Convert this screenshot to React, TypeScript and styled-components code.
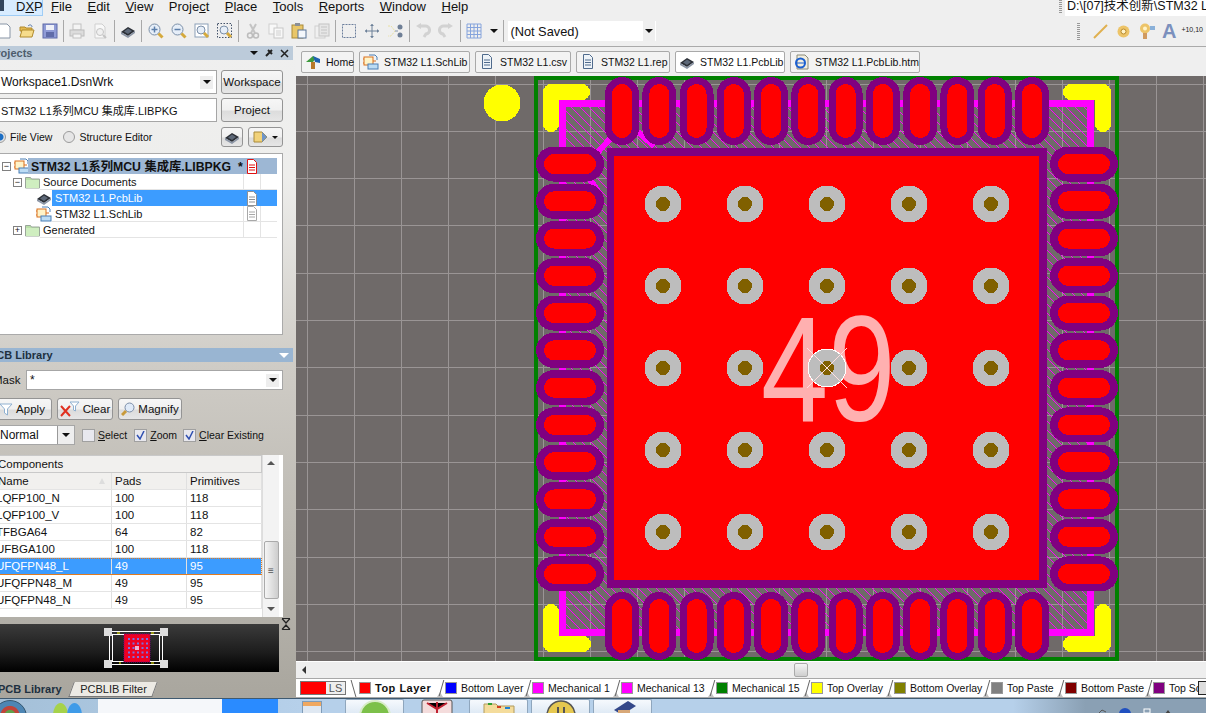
import React from 'react'
import styled, { createGlobalStyle } from 'styled-components'

const FONT = '"Liberation Sans", "Noto Sans CJK SC", Arial, sans-serif'

const GlobalStyle = createGlobalStyle`
  html, body {
    margin: 0;
    padding: 0;
    overflow: hidden;
    background: #efefef;
    font-family: ${FONT};
    font-size: 11px;
    color: #111;
  }
  * { box-sizing: border-box; }
  u { text-underline-offset: 1px; }
`

const Page = styled.div`
  width: 1206px;
  height: 713px;
  display: flex;
  flex-direction: column;
  overflow: hidden;
  background: #efefef;
`

/* ---------- icons ---------- */

const Svg: React.FC<{ w?: number; h?: number; children: React.ReactNode }> = ({ w = 16, h = 16, children }) => (
  <svg width={w} height={h} viewBox={`0 0 ${w} ${h}`} style={{ display: 'block', flex: 'none' }}>
    {children}
  </svg>
)

const Doc = ({ stroke = '#7d8794', fill = '#fff', line = '#7d8794' }) => (
  <Svg w={12} h={15}>
    <path d="M1.5 .5h6l3 3v11h-9z" fill={fill} stroke={stroke} />
    <path d="M3 6h6M3 8.500h6M3 11h6" stroke={line} />
  </Svg>
)

const Magnifier = ({ inner }: { inner?: React.ReactNode }) => (
  <Svg>
    <circle cx="6.500" cy="6.500" r="5.500" fill="#e6eef8" stroke="#7b8fa8" />
    {inner}
    <path d="M10.500 10.500l4 4" stroke="#d5a93c" strokeWidth="3" />
  </Svg>
)

const ChipIcon = () => (
  <Svg>
    <path d="M1 9l7-5 7 4-7 5z" fill="#2b2f36" />
    <path d="M1 9v2l7 4 7-5V8l-7 5z" fill="#8c96a6" />
    <path d="M4 8.500l4-3 4 2.500-4 3z" fill="#5d6878" />
  </Svg>
)

const SchIcon = () => (
  <Svg>
    <rect x="1" y="3" width="9" height="8" fill="#fff3c8" stroke="#d9701e" />
    <path d="M10 7h3M0 5h1M0 9h1" stroke="#d9701e" />
    <rect x="5" y="10" width="10" height="5" fill="#bcdcf4" stroke="#4a7fb5" />
    <path d="M6 1h6l2 2v3" fill="none" stroke="#4a7fb5" />
  </Svg>
)

const FolderIcon = () => (
  <Svg w={15} h={13}>
    <path d="M.5 3V1.500h5l1 1.500h8v9H.5z" fill="#b9dfa8" stroke="#9aa69a" />
    <rect x="1" y="4" width="13" height="8" fill="#cfeec0" />
  </Svg>
)

const DownTri = ({ color = '#111', size = 4 }: { color?: string; size?: number }) => (
  <Svg w={size * 2} h={size}>
    <path d={`M0 0h${size * 2}l-${size} ${size}z`} fill={color} />
  </Svg>
)

const UpTri = ({ color = '#555', size = 4 }: { color?: string; size?: number }) => (
  <Svg w={size * 2} h={size}>
    <path d={`M0 ${size}h${size * 2}l-${size} -${size}z`} fill={color} />
  </Svg>
)

const FunnelIcon = ({ color = '#8fb0d0' }) => (
  <Svg w={14} h={14}>
    <path d="M1 2h12L8.500 7v6l-3-2V7z" fill="#fff" stroke={color} />
  </Svg>
)

const ClearIcon = () => (
  <Svg w={20} h={16}>
    <path d="M1 5l9 10M10 5L1 15" stroke="#e03020" strokeWidth="2" />
    <path d="M10 1h9l-3.500 4v5l-2-1V5z" fill="#fff" stroke="#8fb0d0" />
  </Svg>
)

const toolIcons: Record<string, React.ReactNode> = {
  new: <Svg><path d="M2 1h9l3 3v11H2z" fill="#fff" stroke="#8895a6" /></Svg>,
  open: (
    <Svg>
      <path d="M1 4h5l1 1h6v3H1z" fill="#e4b94f" stroke="#b08a2c" />
      <path d="M1 14l2-7h12l-2 7z" fill="#f6dc8b" stroke="#b08a2c" />
      <path d="M9 3c2-2 4-1 4 1" fill="none" stroke="#5577aa" />
    </Svg>
  ),
  save: (
    <Svg>
      <rect x="1" y="1" width="14" height="14" fill="#8f9bd6" stroke="#5f6ba8" />
      <rect x="4" y="2" width="8" height="5" fill="#eef0f8" />
      <rect x="4" y="9" width="8" height="5" fill="#5f6ba8" />
    </Svg>
  ),
  print: (
    <Svg>
      <rect x="4" y="1" width="8" height="6" fill="#f4f4f4" stroke="#c2c2c2" />
      <rect x="1" y="7" width="14" height="6" fill="#dcdcdc" stroke="#bcbcbc" />
      <rect x="4" y="11" width="8" height="4" fill="#f4f4f4" stroke="#c2c2c2" />
    </Svg>
  ),
  preview: (
    <Svg>
      <path d="M3 1h7l3 3v11H3z" fill="#f8f8f8" stroke="#cfcfcf" />
      <circle cx="8" cy="9" r="3.500" fill="#f0f0f0" stroke="#c4c4c4" />
      <path d="M11 12l3 3" stroke="#c4c4c4" strokeWidth="2" />
    </Svg>
  ),
  chip: <ChipIcon />,
  zoomIn: <Magnifier inner={<path d="M3.500 6.500h6M6.500 3.500v6" stroke="#5c7faa" strokeWidth="1.500" />} />,
  zoomOut: <Magnifier inner={<path d="M3.500 6.500h6" stroke="#5c7faa" strokeWidth="1.500" />} />,
  zoomFit: (
    <Svg>
      <rect x="1" y="1" width="13" height="13" fill="#fff" stroke="#8ba0b8" />
      <circle cx="7" cy="7" r="4" fill="#e6eef8" stroke="#7b8fa8" />
      <path d="M10 10l4 4" stroke="#d5a93c" strokeWidth="3" />
    </Svg>
  ),
  zoomSel: (
    <Svg>
      <rect x=".5" y=".5" width="14" height="14" fill="none" stroke="#44536a" strokeDasharray="1.500 1.500" />
      <circle cx="7" cy="7" r="4" fill="#e6eef8" stroke="#7b8fa8" />
      <path d="M10 10l4 4" stroke="#d5a93c" strokeWidth="3" />
    </Svg>
  ),
  cut: (
    <Svg>
      <path d="M5 1l5 9M11 1L6 10" stroke="#c4c4c4" strokeWidth="2" />
      <circle cx="5" cy="12.500" r="2.500" fill="none" stroke="#bcbcbc" strokeWidth="1.500" />
      <circle cx="11" cy="12.500" r="2.500" fill="none" stroke="#bcbcbc" strokeWidth="1.500" />
    </Svg>
  ),
  copy: (
    <Svg>
      <rect x="1" y="1" width="8" height="10" fill="#f8f8f8" stroke="#d0d0d0" />
      <rect x="6" y="5" width="9" height="10" fill="#f8f8f8" stroke="#c8c8c8" />
      <path d="M8 8h5M8 10h5M8 12h5" stroke="#d0d0d0" />
    </Svg>
  ),
  paste: (
    <Svg>
      <rect x="1" y="2" width="11" height="13" fill="#e9c668" stroke="#a98a3a" />
      <rect x="4" y="0" width="5" height="3" fill="#8b8f96" />
      <rect x="7" y="7" width="8" height="8" fill="#f4f7fb" stroke="#5b7497" />
    </Svg>
  ),
  pasteSpecial: (
    <Svg>
      <rect x="1" y="3" width="10" height="12" fill="#f0f0f0" stroke="#cfcfcf" />
      <rect x="5" y="1" width="10" height="12" fill="#e6e6e6" stroke="#c4c4c4" />
      <path d="M7 4h6M7 7h6M7 10h6" stroke="#c4c4c4" />
    </Svg>
  ),
  select: <Svg><rect x="1.500" y="1.500" width="13" height="13" fill="none" stroke="#6c7f9c" strokeDasharray="2 1" /></Svg>,
  move: (
    <Svg>
      <path d="M8 1v14M1 8h14" stroke="#6c8098" />
      <path d="M8 1l-2 2h4zM8 15l-2-2h4zM1 8l2-2v4zM15 8l-2-2v4z" fill="#6c8098" />
    </Svg>
  ),
  swap: (
    <Svg>
      <path d="M1 3h3l4 5-4 5H1" fill="none" stroke="#e8dfa2" strokeDasharray="2 1" />
      <path d="M8 8h3" stroke="#8292a8" />
      <circle cx="13" cy="4" r="2.500" fill="#6f7f96" />
      <circle cx="13" cy="12" r="2.500" fill="#6f7f96" />
    </Svg>
  ),
  undo: <Svg><path d="M4 3h6a4 4 0 0 1 1 8l-2 3" fill="none" stroke="#d2d2d2" strokeWidth="3" /><path d="M1 3l5-3v6z" fill="#d2d2d2" /></Svg>,
  redo: <Svg><path d="M12 3H6a4 4 0 0 0-1 8l2 3" fill="none" stroke="#d2d2d2" strokeWidth="3" /><path d="M15 3l-5-3v6z" fill="#d2d2d2" /></Svg>,
  grid: (
    <Svg>
      <path d="M1 1v14M4.500 1v14M8 1v14M11.500 1v14M15 1v14M1 1h14M1 4.500h14M1 8h14M1 11.500h14M1 15h14" stroke="#86a4dc" />
    </Svg>
  )
}

/* ---------- menu and toolbar ---------- */

const MenuBar = styled.div`
  height: 16px;
  display: flex;
  align-items: flex-start;
  gap: 15.500px;
  font-size: 13px;
  line-height: 13px;
`

const DxpButton = styled.div`
  width: 43px;
  height: 16px;
  margin-right: -7.500px;
  padding-left: 16px;
  background: #d8ecff;
  border: 1px solid #9fcdf6;
  border-top: none;
  border-left: none;
  position: relative;
  &::before {
    content: '';
    position: absolute;
    left: 0;
    top: 0;
    width: 4px;
    height: 11px;
    background: #33465e;
  }
`

const MenuItem = styled.span``

const AddressWrap = styled.div`
  margin-left: auto;
  display: flex;
  align-items: flex-start;
`

const Gripper = styled.div<{ $height: number }>`
  width: 3px;
  height: ${p => p.$height}px;
  margin-right: 3px;
  background: repeating-linear-gradient(to bottom, #999 0 1px, transparent 1px 2px);
`

const Address = styled.div`
  width: 141px;
  height: 16px;
  padding-left: 2px;
  background: #fff;
  font-size: 12.500px;
  white-space: nowrap;
  overflow: hidden;
`

const Toolbar = styled.div`
  height: 30px;
  display: flex;
  align-items: center;
  margin-left: -8px;
`

const ToolButton = styled.div`
  width: 23px;
  height: 23px;
  flex: none;
  display: flex;
  align-items: center;
  justify-content: center;
`

const ToolSeparator = styled.div`
  width: 1px;
  height: 22px;
  flex: none;
  margin: 0 2px 0 1.800px;
  background: #a8a8a8;
`

const ArrowButton = styled.div`
  width: 16px;
  height: 20px;
  flex: none;
  display: flex;
  align-items: center;
  justify-content: center;
`

const ConfigCombo = styled.div`
  width: 148px;
  height: 20px;
  margin-left: 2px;
  flex: none;
  display: flex;
  align-items: center;
  justify-content: space-between;
  padding-left: 2px;
  background: #fff;
  font-size: 12.800px;
`

const ComboArrow = styled.div`
  width: 12px;
  align-self: stretch;
  margin-right: 1px;
  display: flex;
  align-items: center;
  justify-content: center;
  background: #efefef;
`

const RightTools = styled.div`
  margin-left: auto;
  display: flex;
  align-items: center;
  gap: 9px;
  padding-right: 3px;
`

const LetterA = styled.span`
  font-size: 20px;
  font-weight: bold;
  line-height: 20px;
  color: #7b90bd;
  margin: 0 -1px 0 -2px;
`

const CoordLabel = styled.span`
  font-size: 7px;
  margin-top: -3px;
  color: #222;
  margin-left: -3px;
`

/* ---------- side panel ---------- */

const Main = styled.div`
  flex: 1;
  min-height: 0;
  display: flex;
`

const Panel = styled.aside`
  width: 310px;
  margin-left: -14px;
  flex: none;
  display: flex;
  flex-direction: column;
  padding: 0 13px 0 6px;
  overflow: hidden;
  background: linear-gradient(to bottom, #efefef 0, #eeeeec 130px, #cfccc6 320px, #a9a69e 652px);
`

const PanelTitle = styled.div<{ $active?: boolean; $gap?: number }>`
  height: 14px;
  flex: none;
  margin: ${p => p.$gap || 0}px -10px 0 -6px;
  padding: 0 4px 0 3px;
  display: flex;
  align-items: center;
  justify-content: space-between;
  font-weight: bold;
  line-height: 14px;
  background: ${p => (p.$active ? '#99b5d2' : '#bccbda')};
  color: ${p => (p.$active ? '#20303f' : '#4e5d6c')};
`

const TitleIcons = styled.div`
  display: flex;
  align-items: center;
  gap: 6px;
`

const FormRow = styled.div<{ $gap: number; $height: number; $size?: number }>`
  flex: none;
  height: ${p => p.$height}px;
  margin-top: ${p => p.$gap}px;
  display: flex;
  align-items: center;
  white-space: nowrap;
  font-size: ${p => p.$size || 11}px;
`

const FieldBox = styled.div<{ $width: number; $size?: number; $left?: number }>`
  width: ${p => p.$width}px;
  height: 100%;
  flex: none;
  display: flex;
  align-items: center;
  justify-content: space-between;
  padding-left: ${p => p.$left ?? 8}px;
  background: #fff;
  border: 1px solid #a6a6a6;
  font-size: ${p => p.$size || 12}px;
  white-space: nowrap;
  overflow: hidden;
`

const FieldArrow = styled.div`
  width: 13px;
  height: 13px;
  margin-right: 3px;
  display: flex;
  align-items: center;
  justify-content: center;
  background: #eee;
`

const ComboDrop = styled.div`
  width: 17px;
  height: 18px;
  flex: none;
  display: flex;
  align-items: center;
  justify-content: center;
  background: #eee;
  border-left: 1px solid #999;
`

const SideButton = styled.div<{ $width: number; $left?: number }>`
  width: ${p => p.$width}px;
  height: 100%;
  margin-left: ${p => p.$left || 0}px;
  flex: none;
  display: flex;
  align-items: center;
  justify-content: center;
  gap: 3px;
  background: linear-gradient(to bottom, #f6f6f6 0, #f0f0f0 50%, #dcdcdc 55%, #e6e6e6 100%);
  border: 1px solid #949494;
  border-radius: 3px;
  font-size: 11.500px;
`

const Radio = styled.span<{ $checked?: boolean; $left: number }>`
  width: 12px;
  height: 12px;
  margin-left: ${p => p.$left}px;
  margin-right: 4px;
  flex: none;
  border-radius: 50%;
  border: 1px solid #9b9b9b;
  background: ${p => (p.$checked ? 'radial-gradient(circle, #1d6fc4 0 3px, #e4e4e4 4px)' : '#e6e6e6')};
`

const RowEnd = styled.div`
  margin-left: auto;
  height: 100%;
  display: flex;
`

const Tree = styled.div`
  height: 182px;
  margin-top: 6px;
  flex: none;
  padding: 4px 5px 0 0;
  background: #fff;
  border: 1px solid #aaa;
  border-left: none;
`

const TreeRow = styled.div<{ $indent: number }>`
  height: 16px;
  padding-left: ${p => p.$indent}px;
  display: flex;
  align-items: center;
`

const Expander = styled.span`
  width: 9px;
  height: 9px;
  margin-right: 3px;
  flex: none;
  display: flex;
  align-items: center;
  justify-content: center;
  border: 1px solid #808080;
  background: #fff;
  font-size: 9px;
  line-height: 7px;
`

const TreeLabel = styled.div<{ $tone: 'root' | 'selected' | 'plain'; $left: number }>`
  flex: 1;
  min-width: 0;
  height: 16px;
  margin-left: ${p => p.$left}px;
  padding-left: 3px;
  display: flex;
  align-items: center;
  font-size: ${p => (p.$tone === 'root' ? 12.300 : 11)}px;
  font-weight: ${p => (p.$tone === 'root' ? 'bold' : 'normal')};
  color: ${p => (p.$tone === 'selected' ? '#fff' : '#111')};
  background: ${p => (p.$tone === 'root' ? '#9db7d4' : p.$tone === 'selected' ? '#3c9cff' : 'transparent')};
  border-bottom: ${p => (p.$tone === 'plain' ? '1px solid #e4e4e4' : 'none')};
`

const TreeText = styled.span`
  flex: 1;
  white-space: nowrap;
`

const TreeCell = styled.span<{ $flat?: boolean }>`
  width: 17px;
  height: 100%;
  flex: none;
  display: flex;
  align-items: center;
  justify-content: center;
  border-left: ${p => (p.$flat ? 'none' : '1px solid #e4e4e4')};
`

const CheckBox = styled.span<{ $left: number }>`
  width: 13px;
  height: 13px;
  margin-left: ${p => p.$left}px;
  margin-right: 3px;
  flex: none;
  display: flex;
  align-items: center;
  justify-content: center;
  background: #e8e8ee;
  border: 1px solid #a0a0a0;
`

const MaskLabel = styled.span`
  width: 34px;
  flex: none;
  padding-left: 1px;
  font-size: 11.500px;
`

const Table = styled.div`
  height: 162px;
  margin-top: 10px;
  flex: none;
  display: grid;
  grid-template-columns: 270px 17px;
  background: #fff;
`

const TableBody = styled.div`
  overflow: hidden;
`

const GroupHead = styled.div`
  height: 18px;
  padding-left: 6px;
  display: flex;
  align-items: center;
  font-size: 11.500px;
  background: #f1f0ee;
  border: 1px solid #c9c9c9;
  border-left: none;
`

const TableRow = styled.div<{ $kind?: 'head' | 'selected' }>`
  height: 17px;
  display: grid;
  grid-template-columns: 120px 75px 75px;
  align-items: center;
  font-size: 11.500px;
  color: ${p => (p.$kind === 'selected' ? '#fff' : '#111')};
  background: ${p => (p.$kind === 'selected' ? '#3c9cff' : p.$kind === 'head' ? '#f1f0ee' : '#fff')};
  outline: ${p => (p.$kind === 'selected' ? '1px dotted #e07b20' : 'none')};
  outline-offset: -1px;
  border-bottom: 1px solid ${p => (p.$kind === 'selected' ? '#e07b20' : '#e4e4e4')};
`

const TableCell = styled.span<{ $left?: number }>`
  height: 100%;
  padding-left: ${p => p.$left ?? 3}px;
  display: flex;
  align-items: center;
  justify-content: space-between;
  border-right: 1px solid #e0e0e0;
  white-space: nowrap;
`

const SortMark = styled.span`
  width: 0;
  height: 0;
  margin-right: 6px;
  border-left: 3px solid transparent;
  border-right: 3px solid transparent;
  border-bottom: 6px solid #ddd;
`

const ScrollColumn = styled.div`
  display: flex;
  flex-direction: column;
  align-items: center;
  padding-top: 6px;
  background: #f3f3f3;
  border-left: 1px solid #ddd;
`

const ScrollThumb = styled.div`
  width: 15px;
  height: 58px;
  margin-top: 76px;
  display: flex;
  align-items: center;
  justify-content: center;
  border: 1px solid #aaa;
  border-radius: 2px;
  background: linear-gradient(to right, #f5f5f5, #cdcdcd);
  font-size: 10px;
  color: #555;
`

const ScrollStepDown = styled.div`
  margin-top: auto;
  padding-bottom: 6px;
`

const PreviewRow = styled.div`
  height: 48px;
  margin-top: 7px;
  margin-right: 4px;
  flex: none;
  display: flex;
  align-items: center;
  justify-content: center;
  background: linear-gradient(to bottom, #3b3b3b 0, #1c1c1c 60%, #000 100%);
`

const Collapse = styled.div`
  position: absolute;
  left: 281px;
  top: 618px;
`

const PanelTabs = styled.div`
  height: 18px;
  margin-top: 8px;
  flex: none;
  display: flex;
  align-items: center;
`

const ActiveTab = styled.span`
  margin: 0 9px 0 6px;
  font-size: 11px;
  font-weight: bold;
  color: #20303f;
`

const OtherTab = styled.span`
  width: 84px;
  height: 15px;
  display: flex;
  align-items: center;
  justify-content: center;
  font-size: 11px;
  color: #222;
  background: #eceae4;
  border: 1px solid #777;
  border-top: none;
  transform: skewX(-20deg);
  & > span { transform: skewX(20deg); }
`

/* ---------- document area ---------- */

const DocArea = styled.div`
  flex: 1;
  min-width: 0;
  display: flex;
  flex-direction: column;
`

const DocTabs = styled.div`
  height: 30px;
  flex: none;
  display: flex;
  align-items: center;
  gap: 5px;
  padding-left: 5px;
  border-top: 1px solid #aaa;
  background: #efefef;
`

const DocTab = styled.div<{ $active?: boolean; $width: number }>`
  width: ${p => p.$width}px;
  height: 22px;
  padding-left: 3px;
  display: flex;
  align-items: center;
  gap: 5px;
  background: ${p => (p.$active ? '#fff' : '#f3f3f3')};
  border: 1px solid #a9a9a9;
  border-radius: 2px;
  font-size: 10.500px;
  white-space: nowrap;
`

const DocIconSlot = styled.span`
  width: 16px;
  flex: none;
  display: flex;
  justify-content: center;
`

const Canvas = styled.div`
  height: 585px;
  flex: none;
  background: #6f6a69;
`

const HScroll = styled.div`
  height: 17px;
  flex: none;
  display: flex;
  align-items: center;
  padding-left: 6px;
  background: #eeeeee;
  border-top: 1px solid #fff;
`

const ScrollLeft = styled.span`
  width: 0;
  height: 0;
  border-top: 4px solid transparent;
  border-bottom: 4px solid transparent;
  border-right: 4px solid #333;
`

const HThumb = styled.div`
  width: 14px;
  height: 14px;
  margin-left: 488px;
  border: 1px solid #aaa;
  border-radius: 2px;
  background: linear-gradient(to bottom, #f4f4f4, #cfcfcf);
`

const LayerBar = styled.div`
  height: 20px;
  flex: none;
  position: relative;
  display: flex;
  align-items: center;
  overflow: hidden;
  background: #fff;
  border-top: 1px solid #a8a8a8;
  border-bottom: 1px solid #a8a8a8;
`

const CurrentLayer = styled.div`
  width: 46px;
  height: 14px;
  margin: 0 14px 0 4px;
  flex: none;
  position: relative;
  display: grid;
  grid-template-columns: 25px 19px;
  border: 1px solid #777;
  &::after {
    content: '';
    position: absolute;
    right: -9px;
    top: -2px;
    height: 17px;
    border-right: 1px solid #666;
    transform: skewX(16deg);
  }
`

const CurrentSwatch = styled.span`
  background: #ff0000;
`

const CurrentMode = styled.span`
  text-align: center;
  font-size: 11px;
  line-height: 12px;
  background: #eee;
  color: #555;
`

const LayerTab = styled.div<{ $bold?: boolean; $width: number }>`
  width: ${p => p.$width}px;
  height: 18px;
  flex: none;
  position: relative;
  display: flex;
  align-items: center;
  gap: 5px;
  white-space: nowrap;
  font-size: ${p => (p.$bold ? 11 : 10.500)}px;
  letter-spacing: ${p => (p.$bold ? 0.5 : 0)}px;
  font-weight: ${p => (p.$bold ? 'bold' : 'normal')};
  &::after {
    content: '';
    position: absolute;
    right: 4px;
    top: 1px;
    height: 16px;
    border-right: 1px solid #666;
    transform: skewX(-16deg);
  }
  &::before {
    content: '';
    position: absolute;
    right: 3px;
    bottom: 0;
    border-left: 3px solid transparent;
    border-right: 3px solid transparent;
    border-bottom: 5px solid #c4c4c4;
  }
`

const LayerSwatch = styled.span<{ $color: string }>`
  width: 10px;
  height: 10px;
  flex: none;
  background: ${p => p.$color};
  outline: 1px solid #999;
`

const LayerScroll = styled.div`
  position: absolute;
  right: 0;
  top: 2px;
  width: 8px;
  height: 14px;
  background: #ddd;
  border: 1px solid #222;
  border-right: none;
`

/* ---------- taskbar ---------- */

const Taskbar = styled.div`
  height: 15px;
  flex: none;
  display: flex;
  align-items: flex-start;
  overflow: hidden;
  border-top: 1px solid #3f5a70;
  background: linear-gradient(to right, #a4c0d8 0, #b6d0ea 25%, #b6d0ea 84%, #8aa0b4 90%, #8aa0b4 100%);
`

const StartOrb = styled.div`
  width: 34px;
  height: 34px;
  margin: 1px 26px 0 -7px;
  flex: none;
  border-radius: 50%;
  border: 1px solid #35566e;
  background: radial-gradient(circle at 50% 45%, #5fa24a 0 5px, #c0443a 6px 9px, #4d86b4 10px);
`

const Balls = styled.div`
  width: 45px;
  flex: none;
  display: flex;
  margin-top: 4px;
`

const Ball = styled.span<{ $color: string }>`
  width: 15px;
  height: 26px;
  margin-right: -1px;
  border-radius: 50%;
  background: ${p => p.$color};
`

const WhiteTask = styled.div`
  width: 124px;
  height: 14px;
  flex: none;
  background: #f5f7fa;
`

const BlueTask = styled.div`
  width: 56px;
  height: 14px;
  margin-right: 24px;
  flex: none;
  background: #2a8bff;
`

const SmallWindow = styled.div`
  width: 20px;
  height: 20px;
  margin: 2px 23px 0 0;
  flex: none;
  border: 1px solid #7f9cb8;
  background: linear-gradient(to bottom, #f0a860 0 4px, #dfe8f2 4px);
`

const TaskTile = styled.div<{ $plain?: boolean }>`
  width: 59px;
  height: 16px;
  margin-right: 3px;
  flex: none;
  display: flex;
  justify-content: center;
  background: ${p => (p.$plain ? 'transparent' : 'linear-gradient(to bottom, #f6f9fd, #dce8f4)')};
  border: ${p => (p.$plain ? 'none' : '1px solid #8fa6bd')};
  border-bottom: none;
  border-radius: 2px 2px 0 0;
`

const Tray = styled.div`
  margin-left: auto;
  display: flex;
  gap: 12px;
  padding: 9px 34px 0 0;
`

/* ---------- PCB drawing ---------- */

const PITCH = 37.27
const PIN_COUNT = 12
const range = (n: number) => Array.from({ length: n }, (_, i) => i)

const GRID_X = range(20).map(i => 307 + i * 47.2)
const GRID_Y = range(13).map(i => 84 + i * 47.3)
const HATCH_X = range(120).map(i => 40 + i * 9)
const VIA_X = [663, 745, 827, 909, 991]
const VIA_Y = [204, 286, 368, 450, 532]

const VerticalPad = ({ cx, y }: { cx: number; y: number }) => (
  <>
    <rect x={cx - 17} y={y} width={34} height={68} rx={17} fill="#800080" />
    <rect x={cx - 10} y={y + 7} width={20} height={54} rx={10} fill="#ff0000" />
  </>
)

const HorizontalPad = ({ x, cy }: { x: number; cy: number }) => (
  <>
    <rect x={x} y={cy - 17.500} width={68} height={35} rx={17.500} fill="#800080" />
    <rect x={x + 8} y={cy - 10} width={52} height={20} rx={10} fill="#ff0000" />
  </>
)

const BoardDrawing = () => (
  <svg width={910} height={585} viewBox="296 76 910 585" style={{ display: 'block' }}>
    <defs>
      <clipPath id="keepout">
        <rect x={566} y={107} width={521} height={522} />
      </clipPath>
    </defs>
    <g shapeRendering="crispEdges">
      {GRID_X.map(x => <line key={x} x1={x} x2={x} y1={76} y2={661} stroke="#9a9595" />)}
      {GRID_Y.map(y => <line key={y} x1={296} x2={1206} y1={y} y2={y} stroke="#9a9595" />)}

      <circle cx={502} cy={103} r={18.500} fill="#ffff00" />
      <rect x={536} y={78} width={581} height={581} fill="none" stroke="#008000" strokeWidth={4} />

      <g clipPath="url(#keepout)">
        {HATCH_X.map(x => <line key={x} x1={x} y1={107} x2={x + 522} y2={629} stroke="#ff00ff" strokeWidth={1} />)}
      </g>
      <rect x={562.500} y={103.500} width={528} height={529} fill="none" stroke="#ff00ff" strokeWidth={7} />
      <path d="M596 154L611 138M638 132L654 146M590 180L598 191" stroke="#ff00ff" strokeWidth={6} fill="none" />

      <g fill="none" stroke="#ffff00" strokeWidth={16} strokeLinecap="round" strokeLinejoin="round">
        <path d="M582 92H551V124" />
        <path d="M1071 92H1103V124" />
        <path d="M551 612V644H583" />
        <path d="M1103 612V644H1071" />
      </g>

      {range(PIN_COUNT).map(i => <VerticalPad key={i} cx={622 + i * PITCH} y={77} />)}
      {range(PIN_COUNT).map(i => <VerticalPad key={i} cx={622 + i * PITCH} y={592} />)}
      {range(PIN_COUNT).map(i => <HorizontalPad key={i} x={536} cy={164 + i * PITCH} />)}
      {range(PIN_COUNT).map(i => <HorizontalPad key={i} x={1050} cy={164 + i * PITCH} />)}

      <rect x={607} y={148} width={440} height={440} fill="#800080" />
      <rect x={614} y={156} width={425} height={424} fill="#ff0000" />

      {VIA_Y.map(y => VIA_X.map(x => (
        <g key={`${x}-${y}`}>
          <circle cx={x} cy={y} r={18.500} fill="#bdbdbd" />
          <circle cx={x} cy={y} r={7} fill="#806000" />
        </g>
      )))}
    </g>

    <text
      transform="translate(761 421) scale(0.8 1)"
      fontFamily="Liberation Sans"
      fontSize={151}
      fill="#ffb0b0"
    >
      49
    </text>

    <g shapeRendering="crispEdges">
      <circle cx={827} cy={368} r={18.500} fill="#bdbdbd" />
      <circle cx={827} cy={368} r={7} fill="#806000" />
      <circle cx={827} cy={368} r={19} fill="none" stroke="#fff" strokeWidth={1} />
      <path d="M807 348L847 388M847 348L807 388" stroke="#ffe0e0" strokeWidth={1} />
    </g>
  </svg>
)

const MiniBoard = () => (
  <svg width={66} height={42} viewBox="0 0 66 42">
    <g fill="none" stroke="#fff">
      <rect x="6.500" y="4.500" width="53" height="33" />
      <rect x="9.500" y="7.500" width="47" height="27" />
    </g>
    {[[1, 1], [57, 1], [1, 33], [57, 33]].map(([x, y]) => (
      <rect key={`${x}-${y}`} x={x} y={y} width={8} height={8} fill="#ddd" />
    ))}
    <rect x="21" y="7" width="26" height="28" fill="#ee0022" stroke="#800080" strokeDasharray="1 1" />
    {VIA_Y.map((_, r) => VIA_X.map((_, c) => (
      <rect key={`${r}-${c}`} x={25 + c * 4.500} y={11 + r * 4.500} width={2} height={2} fill="#7c6fe0" />
    )))}
    <rect x="32" y="19" width="4" height="4" fill="#f0b0d0" />
    <path d="M14 6h3M48 6h3M16 36h2M48 36h3" stroke="#ffff00" />
  </svg>
)

/* ---------- data ---------- */

const toolGroups = [
  ['new', 'open', 'save'],
  ['print', 'preview'],
  ['chip'],
  ['zoomIn', 'zoomOut', 'zoomFit', 'zoomSel'],
  ['cut', 'copy', 'paste', 'pasteSpecial'],
  ['select', 'move', 'swap'],
  ['undo', 'redo']
]

const menus = [
  { name: 'File', before: '', key: 'F', after: 'ile' },
  { name: 'Edit', before: '', key: 'E', after: 'dit' },
  { name: 'View', before: '', key: 'V', after: 'iew' },
  { name: 'Project', before: 'Proje', key: 'c', after: 't' },
  { name: 'Place', before: '', key: 'P', after: 'lace' },
  { name: 'Tools', before: '', key: 'T', after: 'ools' },
  { name: 'Reports', before: '', key: 'R', after: 'eports' },
  { name: 'Window', before: '', key: 'W', after: 'indow' },
  { name: 'Help', before: '', key: 'H', after: 'elp' }
]

const docTabs = [
  { name: 'Home', icon: 'home', width: 53 },
  { name: 'STM32 L1.SchLib', icon: 'sch', width: 111 },
  { name: 'STM32 L1.csv', icon: 'doc', width: 96 },
  { name: 'STM32 L1.rep', icon: 'doc', width: 94 },
  { name: 'STM32 L1.PcbLib', icon: 'chip', width: 110, active: true },
  { name: 'STM32 L1.PcbLib.htm', icon: 'ie', width: 130 }
]

const layers = [
  { name: 'Top Layer', color: '#ff0000', width: 86, bold: true },
  { name: 'Bottom Layer', color: '#0000ff', width: 87 },
  { name: 'Mechanical 1', color: '#ff00ff', width: 89 },
  { name: 'Mechanical 13', color: '#ff00ff', width: 95 },
  { name: 'Mechanical 15', color: '#008000', width: 95 },
  { name: 'Top Overlay', color: '#ffff00', width: 83 },
  { name: 'Bottom Overlay', color: '#808000', width: 97 },
  { name: 'Top Paste', color: '#808080', width: 74 },
  { name: 'Bottom Paste', color: '#800000', width: 88 },
  { name: 'Top Solder', color: '#800080', width: 80 }
]

const components = [
  { name: 'LQFP100_N', pads: 100, primitives: 118 },
  { name: 'LQFP100_V', pads: 100, primitives: 118 },
  { name: 'TFBGA64', pads: 64, primitives: 82 },
  { name: 'UFBGA100', pads: 100, primitives: 118 },
  { name: 'UFQFPN48_L', pads: 49, primitives: 95, selected: true },
  { name: 'UFQFPN48_M', pads: 49, primitives: 95 },
  { name: 'UFQFPN48_N', pads: 49, primitives: 95 }
]

const DocTabIcon = ({ kind }: { kind: string }) => {
  if (kind === 'home') {
    return (
      <Svg>
        <rect x="6" y="8" width="4" height="7" fill="#b8792a" />
        <path d="M1 8l7-6 3 2-3 4z" fill="#3d9a3d" />
        <path d="M8 2l7 3v4l-5-1z" fill="#1f62b0" />
      </Svg>
    )
  }
  if (kind === 'sch') return <SchIcon />
  if (kind === 'chip') return <ChipIcon />
  if (kind === 'ie') {
    return (
      <Svg>
        <path d="M3 1h8l3 3v11H3z" fill="#f1eee0" stroke="#8a8a78" />
        <circle cx="6.500" cy="9" r="4.500" fill="none" stroke="#1a5fd0" strokeWidth="2" />
        <path d="M2 9h9" stroke="#1a5fd0" />
      </Svg>
    )
  }
  return <Doc stroke="#4f6a8c" fill="#eef3f8" line="#4f6a8c" />
}

const CheckMark = () => (
  <Svg w={9} h={9}><path d="M1 4l3 4 4-8" fill="none" stroke="#3050b0" strokeWidth="1.500" /></Svg>
)

const App: React.FC = () => (
  <Page>
    <GlobalStyle />
    <MenuBar>
      <DxpButton>D<u>X</u>P</DxpButton>
      {menus.map(m => (
        <MenuItem key={m.name}>{m.before}<u>{m.key}</u>{m.after}</MenuItem>
      ))}
      <AddressWrap>
        <Gripper $height={14} />
        <Address>D:\[07]技术创新\STM32 L1系列MCU</Address>
      </AddressWrap>
    </MenuBar>

    <Toolbar>
      {toolGroups.map(group => (
        <React.Fragment key={group[0]}>
          {group.map(name => <ToolButton key={name}>{toolIcons[name]}</ToolButton>)}
          <ToolSeparator />
        </React.Fragment>
      ))}
      <ToolButton>{toolIcons.grid}</ToolButton>
      <ArrowButton><DownTri /></ArrowButton>
      <ToolSeparator />
      <ConfigCombo>
        (Not Saved)
        <ComboArrow><DownTri /></ComboArrow>
      </ConfigCombo>
      <RightTools>
        <Gripper $height={17} />
        <Svg><path d="M2 15L15 2" stroke="#e0b050" strokeWidth="2" /></Svg>
        <Svg w={13} h={13}>
          <circle cx="6.500" cy="6.500" r="6" fill="#edc468" />
          <circle cx="6.500" cy="6.500" r="2.500" fill="#fff3c8" stroke="#b98a2c" />
        </Svg>
        <Svg>
          <circle cx="6" cy="5.500" r="5" fill="#edc468" />
          <circle cx="6" cy="5.500" r="2" fill="#fff3c8" />
          <rect x="4" y="10" width="4" height="6" fill="#d09a60" />
          <rect x="11" y="3" width="5" height="4" fill="#8ab0d8" />
        </Svg>
        <LetterA>A</LetterA>
        <CoordLabel>+10,10</CoordLabel>
      </RightTools>
    </Toolbar>

    <Main>
      <Panel>
        <PanelTitle>
          Projects
          <TitleIcons>
            <DownTri size={4} />
            <Svg w={10} h={10}><path d="M2 8l6-6M4 2l4 4" stroke="#222" strokeWidth="2" /></Svg>
            <Svg w={9} h={9}><path d="M1 1l7 7M8 1L1 8" stroke="#222" strokeWidth="1.500" /></Svg>
          </TitleIcons>
        </PanelTitle>

        <FormRow $gap={10} $height={24}>
          <FieldBox $width={225}>
            Workspace1.DsnWrk
            <FieldArrow><DownTri /></FieldArrow>
          </FieldBox>
          <SideButton $width={62} $left={4}>Workspace</SideButton>
        </FormRow>
        <FormRow $gap={4} $height={24}>
          <FieldBox $width={225} $size={11}>STM32 L1系列MCU 集成库.LIBPKG</FieldBox>
          <SideButton $width={62} $left={4}>Project</SideButton>
        </FormRow>
        <FormRow $gap={5} $height={20} $size={10.500}>
          <Radio $checked $left={2} />
          File View
          <Radio $left={11} />
          Structure Editor
          <RowEnd>
            <SideButton $width={22}><ChipIcon /></SideButton>
            <SideButton $width={35} $left={5}>
              <Svg w={16} h={14}>
                <path d="M1 2h8l5 5-5 5H1z" fill="#f1d27a" stroke="#a98a3a" />
                <path d="M9 2l5 5-5 5z" fill="#6f95c8" />
              </Svg>
              <DownTri size={3} />
            </SideButton>
          </RowEnd>
        </FormRow>

        <Tree>
          <TreeRow $indent={10}>
            <Expander>−</Expander>
            <SchIcon />
            <TreeLabel $tone="root" $left={-2}>
              <TreeText>STM32 L1系列MCU 集成库.LIBPKG&nbsp; *</TreeText>
              <TreeCell $flat><Doc stroke="#e01010" fill="#fff" line="#e01010" /></TreeCell>
              <TreeCell $flat />
            </TreeLabel>
          </TreeRow>
          <TreeRow $indent={21}>
            <Expander>−</Expander>
            <FolderIcon />
            <TreeLabel $tone="plain" $left={0}>
              <TreeText>Source Documents</TreeText>
              <TreeCell /><TreeCell />
            </TreeLabel>
          </TreeRow>
          <TreeRow $indent={44}>
            <ChipIcon />
            <TreeLabel $tone="selected" $left={0}>
              <TreeText>STM32 L1.PcbLib</TreeText>
              <TreeCell $flat><Doc fill="#fff" stroke="#8d9095" line="#8d9095" /></TreeCell>
              <TreeCell $flat />
            </TreeLabel>
          </TreeRow>
          <TreeRow $indent={44}>
            <SchIcon />
            <TreeLabel $tone="plain" $left={0}>
              <TreeText>STM32 L1.SchLib</TreeText>
              <TreeCell><Doc stroke="#a8a8a8" line="#a8a8a8" /></TreeCell>
              <TreeCell />
            </TreeLabel>
          </TreeRow>
          <TreeRow $indent={21}>
            <Expander>+</Expander>
            <FolderIcon />
            <TreeLabel $tone="plain" $left={0}>
              <TreeText>Generated</TreeText>
              <TreeCell /><TreeCell />
            </TreeLabel>
          </TreeRow>
        </Tree>

        <PanelTitle $active $gap={13}>
          PCB Library
          <DownTri color="#fff" size={5} />
        </PanelTitle>

        <FormRow $gap={8} $height={20}>
          <MaskLabel>Mask</MaskLabel>
          <FieldBox $width={257} $left={3}>
            *
            <FieldArrow><DownTri /></FieldArrow>
          </FieldBox>
        </FormRow>
        <FormRow $gap={8} $height={22}>
          <SideButton $width={60}><FunnelIcon /> Apply</SideButton>
          <SideButton $width={56} $left={5}><ClearIcon /> Clear</SideButton>
          <SideButton $width={64} $left={5}>
            <Svg w={14} h={14}>
              <circle cx="8.500" cy="5.500" r="4.500" fill="#dfeaf8" stroke="#7c8ea8" />
              <path d="M1 13l4-4" stroke="#c89a3a" strokeWidth="3" />
            </Svg>
            Magnify
          </SideButton>
        </FormRow>
        <FormRow $gap={5} $height={20} $size={10.500}>
          <FieldBox $width={83} $left={7}>
            Normal
            <ComboDrop><DownTri /></ComboDrop>
          </FieldBox>
          <CheckBox $left={7} />
          <span><u>S</u>elect</span>
          <CheckBox $left={7}><CheckMark /></CheckBox>
          <span><u>Z</u>oom</span>
          <CheckBox $left={6}><CheckMark /></CheckBox>
          <span><u>C</u>lear Existing</span>
        </FormRow>

        <Table>
          <TableBody>
            <GroupHead>Components</GroupHead>
            <TableRow $kind="head">
              <TableCell $left={6}>Name <SortMark /></TableCell>
              <TableCell>Pads</TableCell>
              <TableCell>Primitives</TableCell>
            </TableRow>
            {components.map(c => (
              <TableRow key={c.name} $kind={c.selected ? 'selected' : undefined}>
                <TableCell $left={4}>{c.name}</TableCell>
                <TableCell>{c.pads}</TableCell>
                <TableCell>{c.primitives}</TableCell>
              </TableRow>
            ))}
          </TableBody>
          <ScrollColumn>
            <UpTri />
            <ScrollThumb>≡</ScrollThumb>
            <ScrollStepDown><DownTri color="#555" /></ScrollStepDown>
          </ScrollColumn>
        </Table>

        <PreviewRow><MiniBoard /></PreviewRow>
        <Collapse>
          <Svg w={10} h={12}>
            <path d="M1 .5h8M1 .5l4 4.500 4-4.500M1 11.500h8M1 11.500l4-4.500 4 4.500" fill="none" stroke="#222" strokeWidth="1.200" />
          </Svg>
        </Collapse>

        <PanelTabs>
          <ActiveTab>PCB Library</ActiveTab>
          <OtherTab><span>PCBLIB Filter</span></OtherTab>
        </PanelTabs>
      </Panel>

      <DocArea>
        <DocTabs>
          {docTabs.map(tab => (
            <DocTab key={tab.name} $active={tab.active} $width={tab.width}>
              <DocIconSlot><DocTabIcon kind={tab.icon} /></DocIconSlot>
              {tab.name}
            </DocTab>
          ))}
        </DocTabs>
        <Canvas><BoardDrawing /></Canvas>
        <HScroll>
          <ScrollLeft />
          <HThumb />
        </HScroll>
        <LayerBar>
          <CurrentLayer>
            <CurrentSwatch />
            <CurrentMode>LS</CurrentMode>
          </CurrentLayer>
          {layers.map(layer => (
            <LayerTab key={layer.name} $bold={layer.bold} $width={layer.width}>
              <LayerSwatch $color={layer.color} />
              {layer.name}
            </LayerTab>
          ))}
          <LayerScroll />
        </LayerBar>
      </DocArea>
    </Main>

    <Taskbar>
      <StartOrb />
      <Balls>
        <Ball $color="#a6d24a" />
        <Ball $color="#3f9be8" />
      </Balls>
      <WhiteTask />
      <BlueTask />
      <SmallWindow />
      <TaskTile>
        <Svg w={32} h={15}><circle cx="16" cy="16" r="15" fill="#7cc04a" stroke="#d8ecc8" strokeWidth="2" /></Svg>
      </TaskTile>
      <TaskTile $plain>
        <Svg w={32} h={15}>
          <rect x="1" y="1" width="30" height="16" rx="2" fill="#f4dcdc" stroke="#555" />
          <path d="M6 4l10 6 10-6M16 3v12" stroke="#c02030" strokeWidth="2" />
        </Svg>
      </TaskTile>
      <TaskTile>
        <Svg w={32} h={15}>
          <path d="M1 15V4h12l2 2h16v9z" fill="#f4dc9c" stroke="#b09a5c" />
          <rect x="5" y="3" width="4" height="2" fill="#30a030" />
          <rect x="14" y="6" width="4" height="2" fill="#d04020" />
          <rect x="22" y="7" width="5" height="2" fill="#2080d0" />
        </Svg>
      </TaskTile>
      <TaskTile>
        <Svg w={30} h={15}>
          <circle cx="15" cy="15" r="14" fill="#e6c850" stroke="#555" strokeWidth="1.500" />
          <path d="M12 7v8M18 7v8" stroke="#555" strokeWidth="2" />
        </Svg>
      </TaskTile>
      <TaskTile>
        <Svg w={30} h={15}>
          <path d="M6 10L20 1l8 5-14 9z" fill="#34488a" />
          <rect x="10" y="10" width="12" height="5" fill="#d8a878" />
        </Svg>
      </TaskTile>
      <Tray>
        <Svg w={9} h={6}><path d="M0 6l4-4 4 2" fill="none" stroke="#555" /></Svg>
        <Svg w={12} h={6}><circle cx="6" cy="6" r="6" fill="#2050c0" /></Svg>
        <Svg w={9} h={6}><rect x="1" y="1" width="6" height="4" fill="none" stroke="#fff" /></Svg>
        <Svg w={8} h={6}><path d="M4 2l-3 4h6z" fill="#444" /></Svg>
      </Tray>
    </Taskbar>
  </Page>
)

export default App
